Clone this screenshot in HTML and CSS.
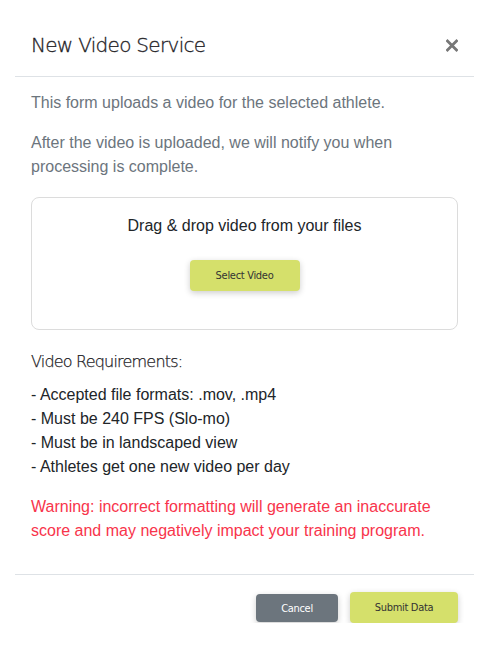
FILE: index.html
```html
<!DOCTYPE html>
<html>
<head>
<meta charset="utf-8">
<link rel="stylesheet" href="styles.css">
</head>
<body>
<div class="modal">
  <div class="modal-header">
    <h1 class="title">New Video Service</h1>
    <button class="close" aria-label="Close">
      <svg width="12" height="13" viewBox="0 0 12 13"><path d="M1.5 2 L10.5 11 M10.5 2 L1.5 11" stroke="#777" stroke-width="2.8" stroke-linecap="square"/></svg>
    </button>
  </div>
  <div class="modal-body">
    <p class="intro">This form uploads a video for the selected athlete.</p>
    <p class="intro">After the video is uploaded, we will notify you when processing is complete.</p>
    <div class="dropzone">
      <div class="drop-text">Drag &amp; drop video from your files</div>
      <button class="btn btn-green btn-select">Select Video</button>
    </div>
    <h2 class="req-title">Video Requirements:</h2>
    <ul class="req-list">
      <li>- Accepted file formats: .mov, .mp4</li>
      <li>- Must be 240 FPS (Slo-mo)</li>
      <li>- Must be in landscaped view</li>
      <li>- Athletes get one new video per day</li>
    </ul>
    <p class="warning">Warning: incorrect formatting will generate an inaccurate score and may negatively impact your training program.</p>
  </div>
  <div class="modal-footer">
    <button class="btn btn-gray btn-cancel">Cancel</button>
    <button class="btn btn-green btn-submit">Submit Data</button>
  </div>
</div>
</body>
</html>
```
FILE: styles.css
```css
* { box-sizing: border-box; }
body {
  margin: 0;
  background: #fff;
  font-family: "Liberation Sans", Arial, sans-serif;
  font-size: 16px;
  line-height: 24px;
  color: #212529;
}
.modal {
  margin: 0 14px 0 15px;
}
.modal-header {
  height: 77px;
  display: flex;
  align-items: center;
  justify-content: space-between;
  padding: 14px 16px 0 16px;
  border-bottom: 1px solid #dee2e6;
}
.title {
  margin: 0;
  font-family: "DejaVu Sans", sans-serif;
  font-weight: 200;
  font-size: 20px;
  letter-spacing: -0.7px;
  color: #1e2125;
  -webkit-text-stroke: 0.3px #1e2125;
}
.close {
  border: 0;
  background: none;
  padding: 0;
  width: 12px;
  height: 13px;
  display: flex;
}
.modal-body {
  display: flex;
  flex-direction: column;
  padding: 14px 16px 16px 16px;
}
.intro {
  margin: 0 0 16px 0;
  color: #6c757d;
}
.dropzone {
  margin-top: 2px;
  border: 1px solid #dcdcdc;
  border-radius: 8px;
  height: 133px;
  display: flex;
  flex-direction: column;
  align-items: center;
  padding-top: 16px;
}
.drop-text {
  color: #212529;
}
.btn {
  border: 0;
  border-radius: 4px;
  font-family: "DejaVu Sans Condensed", "DejaVu Sans", sans-serif;
  font-stretch: condensed;
  font-size: 11px;
  letter-spacing: -0.3px;
  box-shadow: 0 2px 6px rgba(0,0,0,0.2);
}
.btn-green {
  background: #d5e06b;
  color: #333;
}
.btn-gray {
  background: #6c757d;
  color: #fff;
}
.btn-select {
  margin-top: 22px;
  width: 110px;
  height: 31px;
}
.req-title {
  margin: 20px 0 9px 0;
  font-family: "DejaVu Sans", sans-serif;
  font-weight: 200;
  font-size: 16px;
  line-height: 24px;
  letter-spacing: -0.8px;
  color: #1e2125;
  -webkit-text-stroke: 0.25px #1e2125;
}
.req-list {
  list-style: none;
  margin: 0 0 16px 0;
  padding: 0;
}
.warning {
  margin: 0;
  color: #f8344b;
}
.modal-footer {
  border-top: 1px solid #dee2e6;
  margin-top: 15px;
  display: flex;
  justify-content: flex-end;
  gap: 12px;
  padding: 17px 16px 0 0;
}
.btn-cancel {
  width: 82px;
  height: 28px;
  margin-top: 2px;
}
.btn-submit {
  width: 108px;
  height: 31px;
}
```
